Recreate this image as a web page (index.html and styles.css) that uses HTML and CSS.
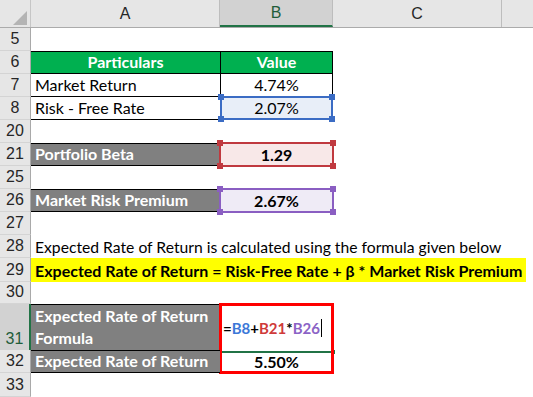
FILE: index.html
```html
<!DOCTYPE html>
<html>
<head>
<meta charset="utf-8">
<link rel="stylesheet" href="styles.css">
</head>
<body>
<div class="sheet">
  <div class="row hdr">
    <div class="corner"><span class="tri"></span></div>
    <div class="ch">A</div>
    <div class="ch sel">B</div>
    <div class="ch">C</div>
    <div class="ch last"></div>
  </div>

  <div class="row r23">
    <div class="rh">5</div><div class="c"></div><div class="c"></div><div class="c"></div><div class="c"></div>
  </div>
  <div class="row r23">
    <div class="rh">6</div>
    <div class="c tb th first">Particulars</div>
    <div class="c tb th first right">Value</div>
    <div class="c"></div><div class="c"></div>
  </div>
  <div class="row r23">
    <div class="rh">7</div>
    <div class="c tb">Market Return</div>
    <div class="c tb right num">4.74%</div>
    <div class="c"></div><div class="c"></div>
  </div>
  <div class="row r23">
    <div class="rh">8</div>
    <div class="c tb">Risk - Free Rate</div>
    <div class="c tb right num fill-blue">2.07%<span class="rng blue"><i class="h tl"></i><i class="h tr"></i><i class="h bl"></i><i class="h br"></i></span></div>
    <div class="c"></div><div class="c"></div>
  </div>
  <div class="row r23">
    <div class="rh">20</div><div class="c"></div><div class="c"></div><div class="c"></div><div class="c"></div>
  </div>
  <div class="row r23">
    <div class="rh">21</div>
    <div class="c gray">Portfolio Beta</div>
    <div class="c num bold fill-red">1.29<span class="rng red"><i class="h tl"></i><i class="h tr"></i><i class="h bl"></i><i class="h br"></i></span></div>
    <div class="c"></div><div class="c"></div>
  </div>
  <div class="row r23">
    <div class="rh">25</div><div class="c"></div><div class="c"></div><div class="c"></div><div class="c"></div>
  </div>
  <div class="row r23">
    <div class="rh">26</div>
    <div class="c gray">Market Risk Premium</div>
    <div class="c num bold fill-purple">2.67%<span class="rng purple"><i class="h tl"></i><i class="h tr"></i><i class="h bl"></i><i class="h br"></i></span></div>
    <div class="c"></div><div class="c"></div>
  </div>
  <div class="row r23">
    <div class="rh">27</div><div class="c"></div><div class="c"></div><div class="c"></div><div class="c"></div>
  </div>
  <div class="row r23">
    <div class="rh">28</div>
    <div class="c span plain">Expected Rate of Return is calculated using the formula given below</div>
  </div>
  <div class="row r24">
    <div class="rh">29</div>
    <div class="c span yellow">Expected Rate of Return = Risk-Free Rate + β * Market Risk Premium</div>
  </div>
  <div class="row r22">
    <div class="rh">30</div><div class="c"></div><div class="c"></div><div class="c"></div><div class="c"></div>
  </div>
  <div class="row r46">
    <div class="rh active">31</div>
    <div class="c gray wrap">Expected Rate of Return Formula</div>
    <div class="c formula"><span class="k">=</span><span class="fb">B8</span><span class="k">+</span><span class="fr">B21</span><span class="k">*</span><span class="fp">B26</span><span class="caret"></span><span class="cursor"><i class="fh"></i></span><span class="redbox"></span></div>
    <div class="c"></div><div class="c"></div>
  </div>
  <div class="row r23">
    <div class="rh">32</div>
    <div class="c gray">Expected Rate of Return</div>
    <div class="c num bold">5.50%</div>
    <div class="c"></div><div class="c"></div>
  </div>
  <div class="row r24">
    <div class="rh">33</div><div class="c"></div><div class="c"></div><div class="c"></div><div class="c"></div>
  </div>
</div>
</body>
</html>
```

FILE: styles.css
```css
* { box-sizing: border-box; }
html, body { margin: 0; padding: 0; background: #fff; }
body {
  font-family: Lato, "Liberation Sans", sans-serif;
  font-size: 16px;
  color: #000;
  width: 533px;
  height: 397px;
  overflow: hidden;
}
.sheet { display: flex; flex-direction: column; width: 533px; }
.row {
  display: grid;
  grid-template-columns: 31px 189px 113px 169px 31px;
}
.hdr { height: 28px; background: #e6e6e6; border-bottom: 1px solid #ababab; }
.r22 { height: 22px; }
.r23 { height: 23px; }
.r24 { height: 24px; }
.r46 { height: 46px; }

.corner { position: relative; border-right: 1px solid #c6c6c6; }
.tri {
  position: absolute; left: 13px; top: 11px;
  width: 0; height: 0;
  border-left: 14px solid transparent;
  border-bottom: 14px solid #b4b4b4;
}
.ch {
  display: flex; align-items: center; justify-content: center;
  color: #262626; font-family: "Liberation Sans", sans-serif; font-size: 16px;
  border-right: 1px solid #bdbdbd;
}
.ch.sel { background: #d2d2d2; border-bottom: 2px solid #217346; color: #1f5d3a; }
.ch.last { border-right: none; }

.rh {
  background: #e6e6e6;
  border-right: 1px solid #a9a9a9;
  border-bottom: 1px solid #d4d4d4;
  display: flex; align-items: flex-end; justify-content: center;
  padding-bottom: 1px;
  color: #262626; font-family: "Liberation Sans", sans-serif; font-size: 16px;
  line-height: 20px;
}
.rh.active { background: #d2d2d2; border-right: 2px solid #217346; color: #1f5d3a; }

.c {
  position: relative;
  display: flex; align-items: flex-end;
  padding: 0 4px 1px 4px;
  line-height: 20px;
  white-space: nowrap;
}
.plain { font-size: 15.7px; }
.tb { border-bottom: 1px solid #000; }
.tb.first { border-top: 1px solid #000; }
.tb.right { border-left: 1px solid #000; border-right: 1px solid #000; }
.th { background: #00b050; color: #fff; font-weight: bold; justify-content: center; }
.num { justify-content: center; }
.bold { font-weight: bold; }

.gray {
  background: #808080; color: #fff; font-weight: bold;
  border-top: 1px solid #000; border-bottom: 1px solid #000;
}
.wrap { white-space: normal; line-height: 22px; align-items: flex-end; }

.fill-blue { background: #e8eef8; }
.fill-red { background: #f8e8e8; }
.fill-purple { background: #efebf6; }

.rng { position: absolute; left: -1px; top: -1px; right: -1px; bottom: -1px; border: 2px solid; }
.rng.blue { border-color: #3b6cc4; color: #3b6cc4; }
.rng.red { border-color: #c0393f; color: #c0393f; }
.rng.purple { border-color: #8a5ec2; color: #8a5ec2; }
.h { position: absolute; width: 6px; height: 6px; background: currentColor; }
.h.tl { left: -4px; top: -4px; }
.h.tr { right: -4px; top: -4px; }
.h.bl { left: -4px; bottom: -4px; }
.h.br { right: -4px; bottom: -4px; }

.span { grid-column: 2 / 6; }
.yellow { background: #ffff00; font-weight: bold; width: 495px; }

.formula {
  align-items: flex-start;
  padding-top: 14px;
  padding-left: 3px;
  font-weight: bold;
  font-size: 15px;
}
.k { color: #000; }
.fb { color: #3c78d8; }
.fr { color: #cf3a3a; }
.fp { color: #8b63c6; }
.caret { display: inline-block; width: 1px; height: 18px; background: #000; margin-left: 1px; margin-top: 1px; }
.cursor {
  position: absolute; left: 2px; right: 1px; bottom: -2px; height: 2px;
  background: #217346;
}
.fh { position: absolute; right: -3px; top: -1px; width: 4px; height: 4px; background: #217346; }
.redbox {
  position: absolute; left: -1px; top: -1px; width: 115px; height: 71px;
  border: 3px solid #ff0000;
}
```
